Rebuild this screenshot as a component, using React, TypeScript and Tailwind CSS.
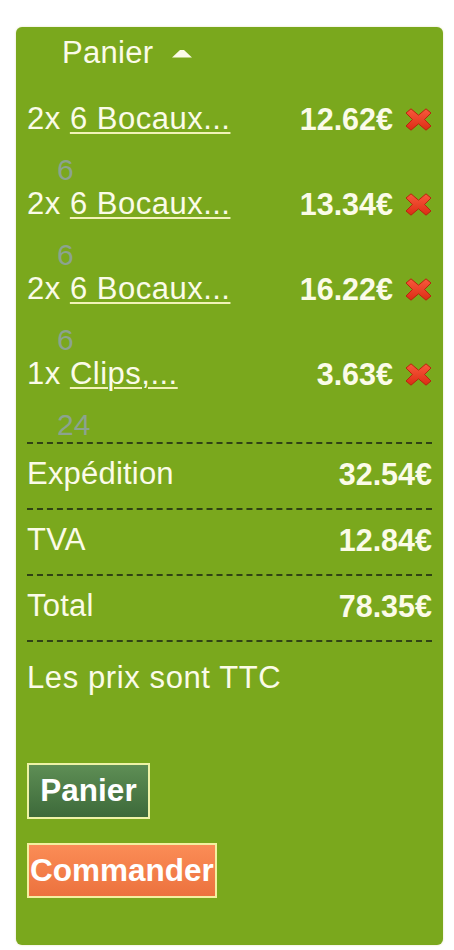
import React from "react";

const items = [
  { q: "2x", name: "6 Bocaux...", price: "12.62€", n: "6" },
  { q: "2x", name: "6 Bocaux...", price: "13.34€", n: "6" },
  { q: "2x", name: "6 Bocaux...", price: "16.22€", n: "6" },
  { q: "1x", name: "Clips,...", price: "3.63€", n: "24" },
];

function RedX() {
  return (
    <svg width="27" height="23" viewBox="0 0 27 23" className="ml-[12px] shrink-0">
      <defs>
        <linearGradient id="rx" x1="0" y1="0" x2="0" y2="1">
          <stop offset="0" stopColor="#f85a3c" />
          <stop offset="1" stopColor="#dc2c15" />
        </linearGradient>
      </defs>
      <path
        d="M1 5 L6 0.8 L13.5 7.2 L21 0.8 L26 5 L19.5 11.5 L26 18 L21 22.2 L13.5 15.8 L6 22.2 L1 18 L7.5 11.5 Z"
        fill="url(#rx)"
        stroke="#b8250f"
        strokeWidth="1"
        strokeLinejoin="round"
      />
    </svg>
  );
}

export default function App() {
  return (
    <div
      className="bg-white w-[454px] h-[950px] pt-[27px] pl-[16px]"
      style={{ fontFamily: '"Liberation Sans", Arial, sans-serif' }}
    >
      <div className="w-[427px] h-[918px] bg-[#7aa81d] rounded-[6px] px-[11px] pt-[10px] text-white shadow-[0_0_2px_rgba(200,200,120,0.6)]">
        <div className="flex items-center pl-[35px] h-[31px] text-[31px] leading-[31px] tracking-[0.3px] text-[#fbfbe8]">
          <span>Panier</span>
          <svg width="20" height="8" viewBox="0 0 20 8" className="ml-[19px] mt-[2px]">
            <path d="M8 0 L12 0 L20 7.5 L0 7.5 Z" fill="#fbfbe8" />
          </svg>
        </div>

        <div className="mt-[33px]">
          {items.map((it, i) => (
            <div key={i} className={i === 0 ? "" : "mt-[1px]"}>
              <div className="flex items-center h-[36px] text-[31px] leading-[36px] tracking-[0.5px]">
                <span className="text-[#fbfbe8]">{it.q}&nbsp;</span>
                <span className="underline decoration-2 underline-offset-[3px] decoration-[#f2f2b8] text-[#fbfbe8]">
                  {it.name}
                </span>
                <span className="ml-auto font-bold text-[30.5px] tracking-normal text-[#fbfbe8]">{it.price}</span>
                <RedX />
              </div>
              <div className="mt-[18px] h-[30px] leading-[30px] text-[30px] pl-[30px] text-[#8ea39c] opacity-90">
                {it.n}
              </div>
            </div>
          ))}
        </div>

        <div className="mt-[2px] border-t-2 border-dashed border-[#2f4214]">
          {[
            ["Expédition", "32.54€"],
            ["TVA", "12.84€"],
            ["Total", "78.35€"],
          ].map(([l, v]) => (
            <div
              key={l}
              className="flex items-center justify-between h-[66px] pb-[3px] border-b-2 border-dashed border-[#2f4214] text-[31px] text-[#fbfbe8]"
            >
              <span className="tracking-[0.2px]">{l}</span>
              <span className="font-bold text-[30.5px]">{v}</span>
            </div>
          ))}
        </div>

        <p className="mt-[20px] text-[31px] leading-[31px] tracking-[0.6px] text-[#fbfbe8]">Les prix sont TTC</p>

        <div className="mt-[70px] flex flex-col items-start">
          <button className="h-[56px] w-[123px] border-2 border-[#eef2a6] bg-gradient-to-b from-[#5e8e55] to-[#3d6a3a] text-white font-bold text-[31.5px] leading-none flex items-center justify-center">
            Panier
          </button>
          <button className="mt-[24px] h-[55px] w-[190px] border-2 border-[#f3f0a0] bg-gradient-to-b from-[#fb8c56] to-[#ec723e] text-white font-bold text-[31.5px] leading-none flex items-center justify-center whitespace-nowrap">
            Commander
          </button>
        </div>
      </div>
    </div>
  );
}
